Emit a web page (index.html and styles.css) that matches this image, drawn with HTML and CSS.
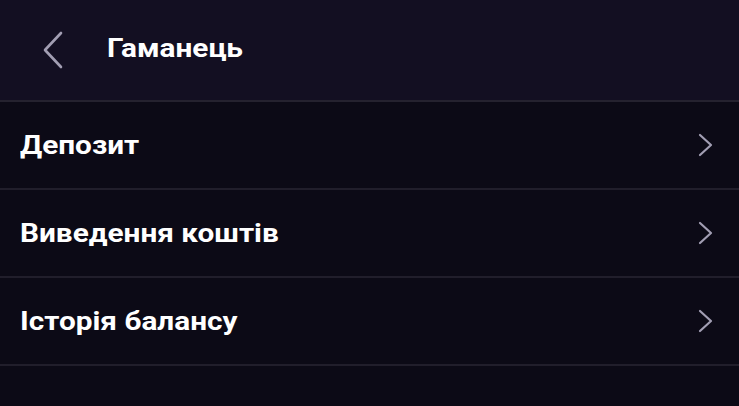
FILE: index.html
```html
<!DOCTYPE html>
<html lang="uk">
<head>
    <meta charset="UTF-8">
    <meta name="viewport" content="width=device-width, initial-scale=1.0">
    <title>Гаманець</title>
    <link rel="stylesheet" href="styles.css">
</head>
<body>
    <div class="header">
        <button class="back-btn" aria-label="Назад">
            <svg width="26" height="40" viewBox="0 0 26 40">
                <path d="M21 3 L5 20 L21 37" fill="none" stroke="#a29eb3" stroke-width="2.6" stroke-linecap="round" stroke-linejoin="round"/>
            </svg>
        </button>
        <h1 class="label">Гаманець</h1>
    </div>

    <div class="menu">
        <a class="menu-item" href="#">
            <span class="label">Депозит</span>
            <svg class="chevron" width="18" height="26" viewBox="0 0 18 26">
                <path d="M3 3 L14 13 L3 23" fill="none" stroke="#a29eb3" stroke-width="2.2" stroke-linecap="round" stroke-linejoin="round"/>
            </svg>
        </a>
        <a class="menu-item" href="#">
            <span class="label">Виведення коштів</span>
            <svg class="chevron" width="18" height="26" viewBox="0 0 18 26">
                <path d="M3 3 L14 13 L3 23" fill="none" stroke="#a29eb3" stroke-width="2.2" stroke-linecap="round" stroke-linejoin="round"/>
            </svg>
        </a>
        <a class="menu-item" href="#">
            <span class="label">Історія балансу</span>
            <svg class="chevron" width="18" height="26" viewBox="0 0 18 26">
                <path d="M3 3 L14 13 L3 23" fill="none" stroke="#a29eb3" stroke-width="2.2" stroke-linecap="round" stroke-linejoin="round"/>
            </svg>
        </a>
    </div>
</body>
</html>
```

FILE: styles.css
```css
body {
    margin: 0;
    background: #0c0a16;
    font-family: Roboto, 'Noto Sans', sans-serif;
    color: #ffffff;
}

.header {
    height: 100px;
    display: flex;
    align-items: center;
    background: #130f22;
    border-bottom: 2px solid #25222f;
}

.back-btn {
    background: none;
    border: none;
    padding: 0;
    margin-left: 40px;
    width: 26px;
    height: 40px;
    cursor: pointer;
}

.back-btn svg {
    display: block;
}

/* the text in the mockup is drawn wider than plain Roboto */
.label {
    display: inline-block;
    transform: scaleX(1.145);
    transform-origin: left center;
}

h1 {
    margin: 0 0 4px 41px;
    font-size: 26px;
    font-weight: 700;
}

.menu-item {
    height: 86px;
    display: flex;
    align-items: center;
    justify-content: space-between;
    padding: 0 24px 0 20px;
    border-bottom: 2px solid #211e2b;
    color: #ffffff;
    text-decoration: none;
    font-size: 26px;
    font-weight: 700;
}

.chevron {
    display: block;
}
```
